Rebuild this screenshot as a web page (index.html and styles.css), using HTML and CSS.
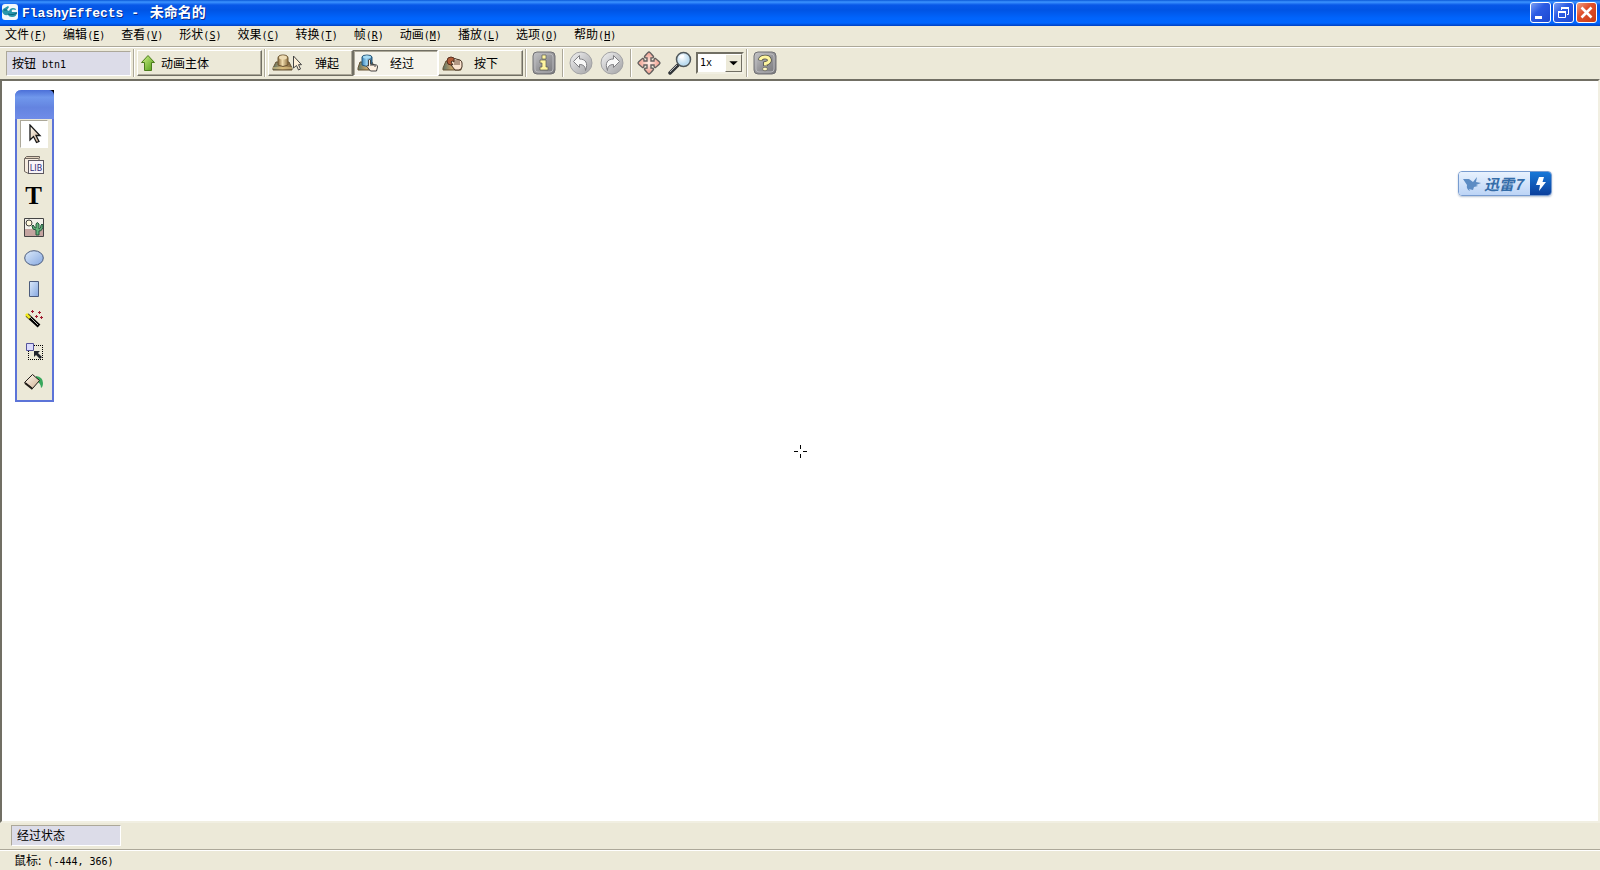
FILE: index.html
```html
<!DOCTYPE html>
<html lang="zh-CN">
<head>
<meta charset="utf-8">
<title>FlashyEffects - 未命名的</title>
<link rel="stylesheet" href="styles.css">
</head>
<body>
<svg class="defs" width="0" height="0" aria-hidden="true">
  <defs>
    <linearGradient id="steel" x1="0" y1="0" x2="1" y2="1"><stop offset="0" stop-color="#c8c8ca"/><stop offset=".5" stop-color="#98989c"/><stop offset="1" stop-color="#77777b"/></linearGradient>
    <linearGradient id="disc" x1="0" y1="0" x2="1" y2="1"><stop offset="0" stop-color="#f4f4f4"/><stop offset=".5" stop-color="#c8c8ca"/><stop offset="1" stop-color="#a2a2a4"/></linearGradient>
    <linearGradient id="leaf" x1="0" y1="0" x2="1" y2="1"><stop offset="0" stop-color="#d4f48c"/><stop offset="1" stop-color="#4c9a12"/></linearGradient>
    <linearGradient id="brass" x1="0" x2="1"><stop offset="0" stop-color="#8a6c3c"/><stop offset=".45" stop-color="#f0dcae"/><stop offset="1" stop-color="#8e7040"/></linearGradient>
    <linearGradient id="base" x1="0" x2="1"><stop offset="0" stop-color="#5c7468"/><stop offset=".5" stop-color="#c8a468"/><stop offset="1" stop-color="#7c6440"/></linearGradient>
    <linearGradient id="blue" x1="0" x2="1"><stop offset="0" stop-color="#3c84b8"/><stop offset=".45" stop-color="#98d0f0"/><stop offset="1" stop-color="#2c6898"/></linearGradient>
    <linearGradient id="sky" x1="0" y1="0" x2="1" y2="1"><stop offset="0" stop-color="#dceafa"/><stop offset="1" stop-color="#86a8e0"/></linearGradient>
    <linearGradient id="cream" x1="0" y1="0" x2="1" y2="1"><stop offset="0" stop-color="#fffdf4"/><stop offset="1" stop-color="#d0ae90"/></linearGradient>
    <radialGradient id="glass" cx=".4" cy=".35"><stop offset="0" stop-color="#ffffff"/><stop offset="1" stop-color="#bcdcf0"/></radialGradient>
    <radialGradient id="pink"><stop offset="0" stop-color="#fff0e8"/><stop offset="1" stop-color="#f09c8c"/></radialGradient>
  </defs>
</svg>

<header class="titlebar">
  <svg class="app-icon" width="16" height="16" viewBox="0 0 16 16"><rect width="16" height="16" rx="3" fill="#f2f8fa"/><path d="M1 5l5-3 1 1-2 3 2 1q1-3 4-3t3 2l-3-.5q-2 .5-1 2.500h5q0 5-5 5-3 0-4-2-5 1-6-4z" fill="#2898ac"/><path d="M2 6h3m1 4q3 1 5 .5t4-1.500" stroke="#0c6078" fill="none"/></svg>
  <h1 class="title"><span class="title-latin">FlashyEffects - </span><span>未命名的</span></h1>
  <div class="window-buttons">
    <button class="win" aria-label="最小化"><svg width="19" height="19" viewBox="0 0 19 19"><path d="M4 13h7v3H4z" fill="#fff"/></svg></button>
    <button class="win" aria-label="还原"><svg width="19" height="19" viewBox="0 0 19 19" fill="none" stroke="#fff"><path d="M7.500 7V4.500h7v7H13M4.500 8.500h7v6h-7z"/><path d="M7 5h8M4 9h8" stroke-width="2"/></svg></button>
    <button class="win close" aria-label="关闭"><svg width="19" height="19" viewBox="0 0 19 19"><path d="M4.500 4.500l10 10m0-10l-10 10" stroke="#fff" stroke-width="2.600"/></svg></button>
  </div>
</header>

<nav class="menubar">
  <button class="menu">文件<span class="key">(<u>F</u>)</span></button>
  <button class="menu">编辑<span class="key">(<u>E</u>)</span></button>
  <button class="menu">查看<span class="key">(<u>V</u>)</span></button>
  <button class="menu">形状<span class="key">(<u>S</u>)</span></button>
  <button class="menu">效果<span class="key">(<u>C</u>)</span></button>
  <button class="menu">转换<span class="key">(<u>T</u>)</span></button>
  <button class="menu">帧<span class="key">(<u>R</u>)</span></button>
  <button class="menu">动画<span class="key">(<u>M</u>)</span></button>
  <button class="menu">播放<span class="key">(<u>L</u>)</span></button>
  <button class="menu">选项<span class="key">(<u>O</u>)</span></button>
  <button class="menu">帮助<span class="key">(<u>H</u>)</span></button>
</nav>

<div class="toolbar">
  <div class="field object-name">按钮<span class="key"> btn1</span></div>
  <span class="sep"></span>
  <button class="push body-button"><svg width="16" height="18" viewBox="0 0 16 18"><path d="M8 1.500l6.500 7h-3v8h-7v-8h-3z" fill="url(#leaf)" stroke="#4c7c1c"/></svg><span>动画主体</span></button>
  <span class="sep"></span>
  <div class="states">
    <button class="push state"><svg width="30" height="18" viewBox="0 0 30 18"><path d="M4 8h13l3 6v2H1v-2z" fill="url(#base)" stroke="#665434"/><path d="M1 14h19" stroke="#ecd490"/><path d="M6 4q0-3 5-3t5 3v7q-5 3-10 0z" fill="url(#brass)" stroke="#6c5634"/><ellipse cx="11" cy="3.500" rx="4" ry="2" fill="#eedcb4"/><path d="M21.500 2v12l3-2.500 2 4.500 2-1-2-4.300h3z" fill="#fff0d8" stroke="#444"/></svg><span>弹起</span></button>
    <button class="push state pressed" aria-pressed="true"><svg width="22" height="18" viewBox="0 0 22 18"><path d="M3 8h12l3 6v2H1v-2z" fill="url(#base)" stroke="#665434"/><path d="M5 3q0-2 5-2t5 2v8q-5 3-10 0z" fill="url(#blue)" stroke="#285878"/><ellipse cx="10" cy="3" rx="4" ry="1.500" fill="#a8dcf4"/><path d="M11.500 6q1-1 2 0v4l6 1q1 0 1 2l-1 4h-6l-4-5q1-1 2 0z" fill="#fff0e0" stroke="#444"/><path d="M14 10v2m2-2v2m2-1v2" stroke="#444"/></svg><span>经过</span></button>
    <button class="push state"><svg width="22" height="18" viewBox="0 0 22 18"><path d="M4 7h12l3 7v2H1v-2z" fill="url(#base)" stroke="#665434"/><ellipse cx="9" cy="7" rx="4" ry="4" fill="#b05c38" stroke="#583020"/><path d="M9 8q1-2 3 0V5q1-1 2 0l4 1q2 1 2 3v4q-1 3-3 3h-4l-4-5q1-1 2 0z" fill="#fbe4d0" stroke="#443020"/><path d="M13 6v5m2-5v5m2-5v5" stroke="#6c4c38"/></svg><span>按下</span></button>
  </div>
  <span class="sep"></span>
  <button class="icon-button" aria-label="信息"><svg width="24" height="24" viewBox="0 0 24 24"><rect x="1" y="1" width="22" height="22" rx="4" fill="url(#steel)" stroke="#707074"/><rect x="3" y="3" width="18" height="18" rx="3" fill="none" stroke="#b8b8bc"/><path d="M10 4h4v4h-4zM8 9h6v7h2v3H8v-3h2v-4H8z" fill="#fff6a0" stroke="#5c5c50" stroke-width=".7"/></svg></button>
  <span class="sep"></span>
  <button class="icon-button" aria-label="撤销"><svg width="24" height="24" viewBox="0 0 24 24"><circle cx="12" cy="12" r="11" fill="url(#disc)" stroke="#a2a2a4"/><path d="M4.500 10.500l6-6v3.500c6 0 9 4 6 11.500 0-4-2-6-6-6v3z" fill="#f8f8f8" stroke="#808084"/></svg></button>
  <button class="icon-button" aria-label="重做"><svg width="24" height="24" viewBox="0 0 24 24"><circle cx="12" cy="12" r="11" fill="url(#disc)" stroke="#a2a2a4"/><path d="M19.500 10.500l-6-6v3.500c-6 0-9 4-6 11.500 0-4 2-6 6-6v3z" fill="#f8f8f8" stroke="#808084"/></svg></button>
  <span class="sep"></span>
  <button class="icon-button" aria-label="移动"><svg width="24" height="24" viewBox="0 0 24 24"><path d="M12 1q1 0 4.500 4.500Q17 7 14 7v3h3q0-3 1.500-2.500Q23 11 23 12t-4.500 4.500Q17 17 17 14h-3v3q3 0 2.500 1.500Q13 23 12 23t-4.500-4.500Q7 17 10 17v-3H7q0 3-1.500 2.500Q1 13 1 12t4.500-4.500Q7 7 7 10h3V7Q7 7 7.500 5.500 11 1 12 1z" fill="url(#pink)" stroke="#64605f" stroke-width="1.400"/></svg></button>
  <button class="icon-button" aria-label="缩放"><svg width="24" height="24" viewBox="0 0 24 24"><path d="M10 14l-8 8" stroke="#303438" stroke-width="3.500" stroke-linecap="round"/><path d="M9 14l-7 7" stroke="#b0b4b8"/><circle cx="15.500" cy="8.500" r="7" fill="url(#glass)" stroke="#50585c" stroke-width="1.500"/><path d="M12 7q1-3 4-2" stroke="#fff" stroke-width="2" fill="none"/></svg></button>
  <span class="zoom-box">
    <select class="zoom" aria-label="缩放比例"><option>1x</option></select>
    <svg class="zoom-arrow" width="17" height="18" viewBox="0 0 16 16" aria-hidden="true"><path d="M3.500 6h9L8 10.500z"/></svg>
  </span>
  <span class="sep"></span>
  <button class="icon-button" aria-label="帮助"><svg width="24" height="24" viewBox="0 0 24 24"><rect x="1" y="1" width="22" height="22" rx="4" fill="url(#steel)" stroke="#707074"/><rect x="3" y="3" width="18" height="18" rx="3" fill="none" stroke="#b8b8bc"/><path d="M7 9.500Q8 6 12 6t4.500 3q0 2.500-4 3.500v2.500" fill="none" stroke="#505048" stroke-width="4.500"/><path d="M7 9Q8 6 12 6t4.500 3q0 2.500-4 3.500v2" fill="none" stroke="#fff6a0" stroke-width="3"/><ellipse cx="12" cy="18" rx="2.500" ry="1.800" fill="#fff8c0" stroke="#606058" stroke-width=".7"/></svg></button>
</div>

<main class="canvas">
  <svg class="crosshair" width="13" height="13" viewBox="0 0 13 13"><path d="M6.500 0v4m0 5v4M0 6.500h4m5 0h4" stroke="#000"/></svg>

  <aside class="palette">
    <div class="palette-head"></div>
    <div class="palette-tools">
      <button class="tool selected" aria-label="选择"><svg width="20" height="20" viewBox="0 0 20 20"><path d="M6 1v15l3.500-3.500 3 6 2.500-1-3-6H16z" fill="url(#cream)" stroke="#181818" stroke-width="1.300"/></svg></button>
      <button class="tool" aria-label="库"><svg width="20" height="20" viewBox="0 0 20 20"><path d="M.5 3.500l2-2h13v2" fill="#e0d0bc" stroke="#6c645c"/><path d="M.5 3.500h14l1 2h-11v13l-4-2z" fill="#f6ece0" stroke="#706860"/><rect x="4.500" y="5.500" width="15" height="13" fill="#f8f4f8" stroke="#5c5860"/><text class="lib" x="12" y="16" text-anchor="middle">LIB</text></svg></button>
      <button class="tool text-tool" aria-label="文字">T</button>
      <button class="tool" aria-label="图像"><svg width="20" height="20" viewBox="0 0 20 20"><path d="M.5 1.500h19v18H.5z" fill="#f2f0ea" stroke="#444"/><path d="M1 12h18v7H1z" fill="#c4a4a0"/><circle cx="5" cy="6" r="3" fill="#fff8dc" stroke="#444"/><path d="M12 18v-5q-4 0-4-4 1-2 2 0 0 2 2 2V7q1-3 3 0v5q2 0 2-4 1-2 2 0 0 6-4 6v4z" fill="#64b47c" stroke="#24543c"/></svg></button>
      <button class="tool" aria-label="椭圆"><svg width="20" height="20" viewBox="0 0 20 20"><ellipse cx="10" cy="10" rx="9.300" ry="7.300" fill="url(#sky)" stroke="#4c5c7c"/></svg></button>
      <button class="tool" aria-label="矩形"><svg width="20" height="20" viewBox="0 0 20 20"><path d="M5.500 2.500h9v15h-9z" fill="url(#sky)" stroke="#4c5c7c"/></svg></button>
      <button class="tool" aria-label="魔棒"><svg width="20" height="20" viewBox="0 0 20 20"><path d="M3 5l12 11" stroke="#000" stroke-width="4"/><path d="M2 4l4 4" stroke="#f0e820" stroke-width="3"/><path d="M6 7l8 8" stroke="#b8b8b0"/><path d="M8.500 0v3m-1.500-1.500h3M15.500 1v3m-1.500-1.500h3M12.500 5v3m-1.500-1.500h3M17.500 6v3m-1.500-1.500h3" stroke="#a01c30"/></svg></button>
      <button class="tool" aria-label="变形"><svg width="20" height="20" viewBox="0 0 20 20"><path d="M4 4.500h15M4 18.500h15M4.500 4v15M18.500 4v15" fill="none" stroke="#000" stroke-dasharray="1 1" shape-rendering="crispEdges"/><path d="M2.500 2.500h7v7h-7z" fill="#dcdcfc" stroke="#54549c"/><path d="M10 10h6l-2 2 4 4-2 2-4-4-2 2z" fill="#20242c"/></svg></button>
      <button class="tool" aria-label="填充"><svg width="20" height="20" viewBox="0 0 20 20"><path d="M12 4q7 1 7 7 0 4-2 5 0-5-5-7z" fill="#38a85c"/><path d="M8.500 2.500l7 6-7 8-8-6z" fill="url(#cream)" stroke="#201c18"/><path d="M1 11l7.500 6" stroke="#201c18" stroke-width="2"/></svg></button>
    </div>
  </aside>

  <button class="thunder">
    <span class="thunder-name"><svg width="18" height="16" viewBox="0 0 18 16"><path d="M0 3h6l4 3 4-5-1 5 5 1-5 2 2 1-4 1-1 3-4-1 1 2q-4-2-3-6z" fill="#5c8cc4"/></svg><span>迅雷7</span></span>
    <span class="thunder-bolt"><svg width="12" height="14" viewBox="0 0 12 14"><path d="M4 0h5L7.500 5H11L4 14l1-6H1z" fill="#fff"/></svg></span>
  </button>
</main>

<div class="state-row"><div class="field state-name">经过状态</div></div>
<footer class="statusbar">鼠标:<span class="key coords"> (-444, 366)</span></footer>
</body>
</html>
```
FILE: styles.css
```css
* { box-sizing: border-box; }
body {
  margin: 0;
  min-height: 100vh;
  display: flex;
  flex-direction: column;
  background: #ece9d8;
  color: #000;
  font: 12px/16px "Noto Sans CJK SC", sans-serif;
}
button { font: inherit; color: inherit; border: 0; padding: 0; background: none; }
svg { display: block; flex: none; }
.defs { position: absolute; }
.key { font: 10px/16px "DejaVu Sans Mono", monospace; white-space: pre; }

.titlebar {
  height: 26px;
  flex: none;
  display: flex;
  align-items: center;
  gap: 4px;
  padding: 0 3px 2px 2px;
  background: linear-gradient(#0a58d8 0, #3c94ff 2px, #0858e8 5px, #0054e4 10px, #0064fc 18px, #0066ff 23px, #0040c0 26px);
}
.title {
  margin: 0;
  flex: 1;
  display: flex;
  align-items: baseline;
  gap: 3px;
  color: #fff;
  font: bold 14px/18px "Noto Sans CJK SC", sans-serif;
  text-shadow: 1px 1px #0a2c8c;
}
.title-latin { font: bold 13px/18px "Liberation Mono", monospace; white-space: pre; }
.window-buttons { display: flex; gap: 2px; }
.win {
  width: 21px;
  height: 21px;
  border: 1px solid #fff;
  border-radius: 3px;
  background: linear-gradient(135deg, #7ca0f4, #2c5ce4 40%, #1c48d0);
}
.close { background: linear-gradient(135deg, #f0a084, #e0502c 40%, #c83c14); }

.menubar {
  height: 20px;
  flex: none;
  display: flex;
  align-items: center;
  gap: 16px;
  padding: 0 5px 2px;
}
.menu { display: flex; align-items: baseline; }

.toolbar {
  height: 33px;
  flex: none;
  display: flex;
  align-items: center;
  padding: 0 6px;
  border-top: 1px solid #aca899;
  box-shadow: inset 0 1px #fff;
}
.field {
  border: 1px solid;
  border-color: #aca899 #fff #fff #aca899;
  background: #dcdce8;
  padding-left: 5px;
}
.object-name { width: 125px; height: 25px; line-height: 22px; }
.sep { width: 2px; height: 28px; margin: 0 2px; border-left: 1px solid #aca899; border-right: 1px solid #fff; }
.push {
  height: 26px;
  display: flex;
  align-items: center;
  border: 1px solid;
  border-color: #fff #716f64 #716f64 #fff;
  box-shadow: inset -1px -1px #aca899;
}
.body-button { width: 125px; padding-left: 2px; gap: 5px; }
.states { display: flex; }
.state { width: 85px; padding: 0 13px 0 3px; justify-content: space-between; }
.state.pressed {
  padding-right: 23px;
  border-color: #716f64 #fff #fff #716f64;
  box-shadow: inset 1px 1px #aca899;
  background: #f5f3ea;
}
.state:last-child { padding-right: 24px; }
.icon-button { width: 24px; height: 24px; margin: 0 4px 0 3px; }
.zoom-box { display: grid; align-items: center; justify-items: end; width: 48px; }
.zoom {
  grid-area: 1 / 1;
  appearance: none;
  width: 48px;
  height: 22px;
  padding: 0 0 0 2px;
  border: 2px solid;
  border-color: #716f64 #f1efe2 #f1efe2 #716f64;
  border-radius: 0;
  background: #fff;
  color: #000;
  font: 10px/16px "DejaVu Sans Mono", monospace;
}
.zoom-arrow {
  grid-area: 1 / 1;
  margin-right: 2px;
  border: 1px solid;
  border-color: #fff #716f64 #716f64 #fff;
  background: #ece9d8;
  pointer-events: none;
}

.canvas {
  position: relative;
  flex: 1;
  display: flex;
  align-items: center;
  justify-content: center;
  background: #fff;
  border: 2px solid;
  border-color: #716f64 #f1efe2 #f1efe2 #716f64;
}
.palette {
  position: absolute;
  left: 13px;
  top: 9px;
  width: 39px;
  border: 2px solid #5c74d8;
  border-top: 0;
  border-radius: 6px 0 0 0;
  background: #ece9d8;
}
.palette::before {
  content: "";
  position: absolute;
  top: 0;
  right: -2px;
  width: 5px;
  height: 5px;
  background: #000;
}
.palette-head {
  position: relative;
  height: 29px;
  margin: 0 -2px;
  border-radius: 6px 5px 0 0;
  background: linear-gradient(#4c70d8, #7098ec 25%, #6484e0 60%, #708ce8);
}
.palette-tools { display: flex; flex-direction: column; align-items: center; gap: 3px; padding: 1px 2px 4px 0; }
.tool { width: 28px; height: 28px; display: grid; place-items: center; }
.tool.selected { background: #fff; border: 1px solid; border-color: #aca899 #fff #fff #aca899; }
.text-tool { font: bold 25px/28px "Liberation Serif", serif; }
.lib { font: 8px "DejaVu Sans", sans-serif; fill: #302c7c; }

.thunder {
  position: absolute;
  right: 46px;
  top: 90px;
  width: 94px;
  height: 25px;
  display: flex;
  overflow: hidden;
  border: 1px solid #789cd0;
  border-radius: 4px;
  box-shadow: 0 1px 2px #b8c4d4;
}
.thunder-name {
  flex: 1;
  display: flex;
  align-items: center;
  gap: 3px;
  padding-left: 4px;
  background: linear-gradient(#e8f2fe, #bcd4f6);
  color: #346ca8;
  font: italic bold 15px/22px "Noto Sans CJK SC", sans-serif;
}
.thunder-bolt { width: 21px; height: 23px; display: grid; place-items: center; background: linear-gradient(#1878d8, #0c409c); }

.state-row { height: 26px; flex: none; padding: 2px 11px; }
.state-name { width: 110px; height: 21px; line-height: 18px; }
.statusbar {
  height: 21px;
  flex: none;
  padding: 2px 14px 0;
  border-top: 1px solid #aca899;
  box-shadow: inset 0 1px #fff;
}
```
